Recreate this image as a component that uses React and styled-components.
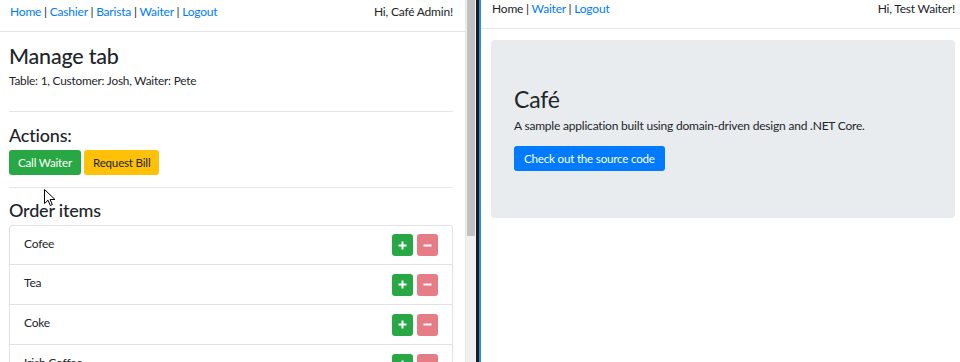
import React from "react";
import styled, { createGlobalStyle } from "styled-components";

const GlobalStyle = createGlobalStyle`
  body {
    margin: 0;
    overflow: hidden;
    font-family: "Segoe UI", Lato, "Open Sans", sans-serif;
    letter-spacing: -0.2px;
    color: #212529;
    background: #ffffff;
  }
  * { box-sizing: border-box; }
`;

const Screen = styled.div`
  display: flex;
  width: 960px;
  height: 362px;
  overflow: hidden;
`;

const Window = styled.div`
  position: relative;
  flex: ${(p) => (p.$grow ? "1" : "none")};
  width: ${(p) => (p.$width ? p.$width + "px" : "auto")};
  height: 100%;
  overflow: hidden;
  background: #ffffff;
`;

const Scrollbar = styled.div`
  width: 11px;
  height: 100%;
  background: #f0f0f0;
  border-left: 1px solid #e6e6e6;
  padding: 0 1px;
`;

const Thumb = styled.div`
  height: 236px;
  background: #c1c1c1;
`;

const Divider = styled.div`
  width: 5px;
  height: 100%;
  background: #1c1c1c;
  border-right: 2px solid #2f8fdc;
`;

const Nav = styled.nav`
  display: flex;
  justify-content: space-between;
  height: ${(p) => p.$height}px;
  padding: ${(p) => p.$pad};
  font-size: 12px;
  line-height: 18px;
  border-bottom: 1px solid #e5e5e5;
`;

const NavLinks = styled.div`
  color: #212529;
`;

const NavLink = styled.a`
  color: ${(p) => (p.$active ? "#212529" : "#007bff")};
  text-decoration: none;
`;

const Greeting = styled.span`
  color: #212529;
`;

const Content = styled.main`
  padding: 0 12px 0 9px;
`;

const Title = styled.h2`
  margin: 10px 0 0;
  font-size: 21.5px;
  font-weight: 500;
  line-height: 28px;
`;

const Meta = styled.p`
  margin: 3px 0 0;
  font-size: 11.8px;
  line-height: 16px;
`;

const Rule = styled.hr`
  margin: ${(p) => p.$margin};
  border: 0;
  border-top: 1px solid #e6e6e6;
`;

const Heading = styled.h4`
  margin: 0;
  font-size: 18px;
  font-weight: 500;
  line-height: 24px;
`;

const ButtonRow = styled.div`
  display: flex;
  gap: 3px;
  margin-top: 3px;
`;

const Button = styled.button`
  height: ${(p) => p.$h || 25}px;
  padding: 0 ${(p) => p.$px || 8}px;
  border: 1px solid transparent;
  border-radius: 3px;
  font-family: inherit;
  font-size: 11.6px;
  letter-spacing: -0.2px;
  line-height: 1;
  color: ${(p) => (p.$variant === "warning" ? "#212529" : "#ffffff")};
  background: ${(p) =>
    ({
      success: "#28a745",
      warning: "#ffc107",
      primary: "#007bff",
      danger: "#e67c86",
    })[p.$variant]};
  cursor: pointer;
`;

const List = styled.ul`
  margin: 3px 0 0;
  padding: 0;
  list-style: none;
  border: 1px solid #e2e2e2;
  border-radius: 3px;
`;

const Item = styled.li`
  display: flex;
  align-items: center;
  justify-content: space-between;
  height: ${(p) => (p.$first ? 38 : 40)}px;
  padding: 0 14px;
  font-size: 12px;
  border-top: ${(p) => (p.$first ? "0" : "1px solid #e2e2e2")};
`;

const ItemName = styled.span`
  margin-top: -4px;
`;

const QtyButtons = styled.div`
  display: flex;
  gap: 4px;
`;

const IconButton = styled(Button)`
  display: flex;
  align-items: center;
  justify-content: center;
  width: 21px;
  padding: 0;
`;

const RightContent = styled.main`
  padding: 11px 5px 0 10px;
`;

const Jumbotron = styled.section`
  height: 178px;
  padding: 44px 23px 0;
  background: #e9ecef;
  border-radius: 4px;
`;

const JumboTitle = styled.h1`
  margin: 0;
  font-size: 23px;
  font-weight: 400;
  line-height: 30px;
`;

const Lead = styled.p`
  margin: 4px 0 12px;
  font-size: 12px;
  line-height: 16px;
`;

const Cursor = styled.svg`
  position: absolute;
  left: 44px;
  top: 189px;
`;

const Plus = () => (
  <svg width="9" height="9" viewBox="0 0 9 9">
    <path d="M4.5 0.5v8M0.5 4.5h8" stroke="#fff" strokeWidth="2" />
  </svg>
);

const Minus = () => (
  <svg width="9" height="9" viewBox="0 0 9 9">
    <path d="M0.5 4.5h8" stroke="#fff" strokeWidth="2" />
  </svg>
);

const items = ["Cofee", "Tea", "Coke", "Irish Coffee"];

const App = () => {
  return (
    <>
      <GlobalStyle />
      <Screen>
        <Window $width={465}>
          <Nav $height={32} $pad="3px 12px 0 10px">
            <NavLinks>
              <NavLink href="#">Home</NavLink> | <NavLink href="#">Cashier</NavLink> |{" "}
              <NavLink href="#">Barista</NavLink> | <NavLink href="#">Waiter</NavLink> |{" "}
              <NavLink href="#">Logout</NavLink>
            </NavLinks>
            <Greeting>Hi, Café Admin!</Greeting>
          </Nav>
          <Content>
            <Title>Manage tab</Title>
            <Meta>Table: 1, Customer: Josh, Waiter: Pete</Meta>
            <Rule $margin="22px 0 11px" />
            <Heading>Actions:</Heading>
            <ButtonRow>
              <Button $variant="success">Call Waiter</Button>
              <Button $variant="warning">Request Bill</Button>
            </ButtonRow>
            <Rule $margin="12px 0 10px" />
            <Heading>Order items</Heading>
            <List>
              {items.map((name, i) => (
                <Item key={name} $first={i === 0}>
                  <ItemName>{name}</ItemName>
                  <QtyButtons>
                    <IconButton $variant="success" $h={22}>
                      <Plus />
                    </IconButton>
                    <IconButton $variant="danger" $h={22}>
                      <Minus />
                    </IconButton>
                  </QtyButtons>
                </Item>
              ))}
            </List>
          </Content>
          <Cursor width="12" height="18" viewBox="0 0 12 18">
            <path
              d="M0.5 0.5v14l3.5-3.3 2.3 5.3 2-0.9-2.2-5.1h4.9z"
              fill="#fff"
              stroke="#000"
              strokeWidth="1"
              strokeLinejoin="round"
            />
          </Cursor>
        </Window>
        <Scrollbar>
          <Thumb />
        </Scrollbar>
        <Divider />
        <Window $grow>
          <Nav $height={29} $pad="0 5px 0 11px">
            <NavLinks>
              <NavLink $active href="#">Home</NavLink> | <NavLink href="#">Waiter</NavLink> |{" "}
              <NavLink href="#">Logout</NavLink>
            </NavLinks>
            <Greeting>Hi, Test Waiter!</Greeting>
          </Nav>
          <RightContent>
            <Jumbotron>
              <JumboTitle>Café</JumboTitle>
              <Lead>A sample application built using domain-driven design and .NET Core.</Lead>
              <Button $variant="primary" $px={9}>Check out the source code</Button>
            </Jumbotron>
          </RightContent>
        </Window>
      </Screen>
    </>
  );
};

export default App;
